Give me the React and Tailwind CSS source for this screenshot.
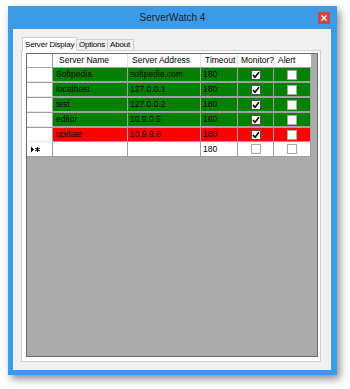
import React from 'react';

const rows = [
    { name: 'Softpedia', address: 'softpedia.com', timeout: '180', monitor: true, alert: false, bg: 'bg-[#008000]' },
    { name: 'localhost', address: '127.0.0.1', timeout: '180', monitor: true, alert: false, bg: 'bg-[#008000]' },
    { name: 'test', address: '127.0.0.2', timeout: '180', monitor: true, alert: false, bg: 'bg-[#008000]' },
    { name: 'editor', address: '10.9.0.5', timeout: '180', monitor: true, alert: false, bg: 'bg-[#008000]' },
    { name: 'update', address: '10.9.0.6', timeout: '180', monitor: true, alert: false, bg: 'bg-[#ff0000]' },
];

// column widths in px
const cols = ['w-[26px]', 'w-[75px]', 'w-[73px]', 'w-[37px]', 'w-[36px]', 'w-[37px]'];

function CheckBox({ checked, faint }) {
    return (
        <div className={`w-[10px] h-[10px] bg-white border flex items-center justify-center ${faint ? 'border-[#a8a8a8]' : 'border-[#555]'}`}>
            {checked && (
                <svg width="8" height="8" viewBox="0 0 8 8">
                    <path d="M1 4 L3 6.2 L7 1.2" fill="none" stroke="#000" strokeWidth="1.6" />
                </svg>
            )}
        </div>
    );
}

function NewRowGlyph() {
    return (
        <svg width="11" height="7" viewBox="0 0 11 7">
            <path d="M1 0.5 L4 3.5 L1 6.5 Z" fill="#000" />
            <path d="M7.5 1 L7.5 6 M5.3 2.2 L9.7 4.8 M5.3 4.8 L9.7 2.2" stroke="#000" strokeWidth="1.1" />
        </svg>
    );
}

export default function App() {
    const cell = 'h-full flex items-center border-r border-b border-[#a0a0a0] shrink-0 whitespace-nowrap overflow-hidden';

    return (
        <div className="w-[350px] h-[389px] bg-white pl-[8px] pt-[6px]" style={{ fontFamily: '"Liberation Sans", Arial, sans-serif' }}>
            <div className="w-[329px] h-[369px] bg-[#3c9be9] flex flex-col shadow-[3px_4px_8px_rgba(0,0,0,0.45)]">
                {/* title bar */}
                <div className="h-[23px] relative flex items-center justify-center text-[10px] text-[#1e1e1e] shrink-0">
                    ServerWatch 4
                    <div className="absolute right-[7px] top-[6px] w-[12px] h-[12px] bg-[#c9484a] flex items-center justify-center">
                        <svg width="6" height="6" viewBox="0 0 6 6">
                            <path d="M0.5 0.5 L5.5 5.5 M5.5 0.5 L0.5 5.5" stroke="#fff" strokeWidth="1.4" />
                        </svg>
                    </div>
                </div>

                {/* client area */}
                <div className="ml-[5px] mr-[6px] mb-[5px] h-[341px] bg-[#f0f0f0] pt-[8px]">
                    {/* tabs */}
                    <div className="flex items-end pl-[9px] h-[13px] relative z-10 text-[8px] tracking-[-0.2px] text-black whitespace-nowrap">
                        <div className="h-[14px] -mb-[1px] pl-[2px] bg-white border border-b-0 border-[#cfcfcf] flex items-center w-[55px]">Server Display</div>
                        <div className="h-[11px] w-[31px] pl-[2px] bg-[#f0f0f0] border border-l-0 border-b-0 border-[#cfcfcf] flex items-center">Options</div>
                        <div className="h-[11px] w-[26px] pl-[2px] bg-[#f0f0f0] border border-l-0 border-b-0 border-[#cfcfcf] flex items-center">About</div>
                    </div>

                    {/* tab panel */}
                    <div className="ml-[8px] w-[300px] h-[312px] bg-white border border-[#cfcfcf] pl-[4px] pt-[2px]">
                        <div className="w-[292px] h-[304px] bg-[#ababab] border border-[#6b6b6b] text-[8.5px] text-black">
                            {/* header */}
                            <div className="flex h-[13px] bg-white w-[284px] whitespace-nowrap">
                                <div className={`${cols[0]} h-full border-r border-[#a0a0a0]`} />
                                <div className={`${cols[1]} h-full border-r border-[#e3e3e3] flex items-center pl-[6px]`}>Server Name</div>
                                <div className={`${cols[2]} h-full border-r border-[#e3e3e3] flex items-center pl-[4px]`}>Server Address</div>
                                <div className={`${cols[3]} h-full border-r border-[#e3e3e3] flex items-center pl-[4px]`}>Timeout</div>
                                <div className={`${cols[4]} h-full border-r border-[#e3e3e3] flex items-center pl-[3px]`}>Monitor?</div>
                                <div className={`${cols[5]} h-full flex items-center pl-[4px]`}>Alert</div>
                            </div>

                            {/* data rows */}
                            {rows.map((r) => (
                                <div key={r.name} className="flex h-[15px] w-[284px] border-t border-[#a0a0a0]">
                                    <div className={`${cols[0]} ${cell} bg-white border-b-[#e6e6e6]`} />
                                    <div className={`${cols[1]} ${cell} ${r.bg} pl-[3px]`}>{r.name}</div>
                                    <div className={`${cols[2]} ${cell} ${r.bg} pl-[2px]`}>{r.address}</div>
                                    <div className={`${cols[3]} ${cell} ${r.bg} pl-[2px]`}>{r.timeout}</div>
                                    <div className={`${cols[4]} ${cell} ${r.bg} justify-center`}><CheckBox checked={r.monitor} /></div>
                                    <div className={`${cols[5]} ${cell} ${r.bg} justify-center`}><CheckBox checked={r.alert} faint /></div>
                                </div>
                            ))}

                            {/* new row */}
                            <div className="flex h-[15px] w-[284px]">
                                <div className={`${cols[0]} ${cell} bg-white pl-[3px]`}><NewRowGlyph /></div>
                                <div className={`${cols[1]} ${cell} bg-white`} />
                                <div className={`${cols[2]} ${cell} bg-white`} />
                                <div className={`${cols[3]} ${cell} bg-white pl-[2px]`}>180</div>
                                <div className={`${cols[4]} ${cell} bg-white justify-center`}><CheckBox faint /></div>
                                <div className={`${cols[5]} ${cell} bg-white justify-center`}><CheckBox faint /></div>
                            </div>
                        </div>
                    </div>
                </div>
            </div>
        </div>
    );
}
